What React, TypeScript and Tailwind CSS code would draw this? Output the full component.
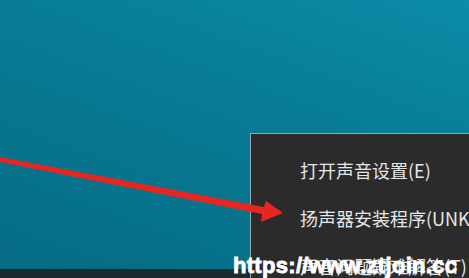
import React from 'react';

const items = ['打开声音设置(E)', '扬声器安装程序(UNKNOWN)', '声音问题疑难解答(T)'];

export default function App() {
  return (
    <div className="relative w-[469px] h-[278px] overflow-hidden flex flex-col bg-[#07738d]">
      <div className="flex-1 bg-[linear-gradient(200deg,#0c8ca7_0%,#087c96_40%,#066b84_100%)]" />
      <div className="h-[9px] bg-[#1d2a30]" />

      {/* context menu */}
      <div
        className="absolute left-[250px] top-[133px] w-[240px] h-[160px] bg-[#2b2b2b] border-l border-t border-[#98a8ad] pt-[12px] pl-[49px] text-[18px] text-[#e6e6e6] whitespace-nowrap"
        style={{ fontFamily: '"Microsoft YaHei", "Noto Sans CJK SC", sans-serif' }}
      >
        {items.map((t) => (
          <div key={t} className="h-[48px] leading-[48px]">{t}</div>
        ))}
      </div>

      {/* red arrow */}
      <svg className="absolute left-0 top-0" width="469" height="278" viewBox="0 0 469 278">
        <polygon points="0,157 0,162 262,214 261,222 283,213 266,201 264,207" fill="#e8261f" />
      </svg>

      {/* watermark */}
      <div
        className="absolute left-[233px] top-[253px] text-[22px] leading-[26px] font-bold text-white whitespace-nowrap tracking-[0.3px] [-webkit-text-stroke:0.8px_white]"
        style={{ fontFamily: '"Liberation Sans", Arial, sans-serif' }}
      >
        https://www.ztjoin.cc
      </div>
    </div>
  );
}
